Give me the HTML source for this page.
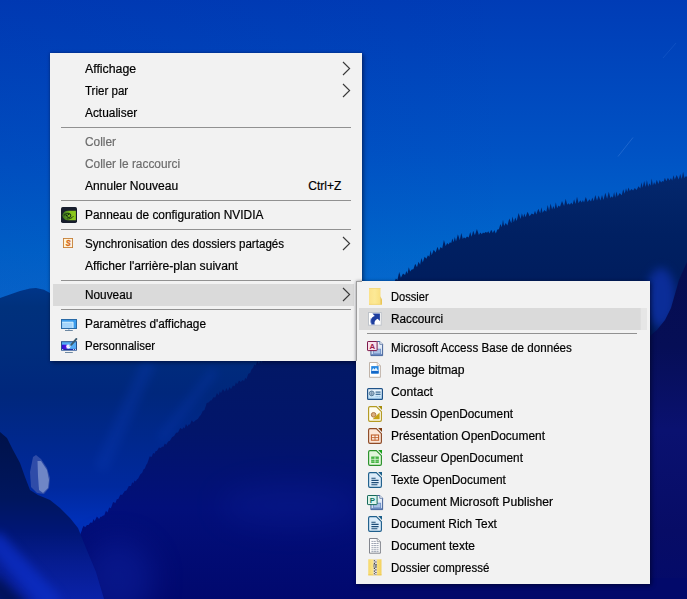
<!DOCTYPE html>
<html><head><meta charset="utf-8"><title>Bureau</title>
<style>
html,body{margin:0;padding:0;}
body{width:687px;height:599px;overflow:hidden;position:relative;background:#0a3aa8;font-family:"Liberation Sans",sans-serif;}
#bg{position:absolute;left:0;top:0;width:687px;height:599px;}
.menu{position:absolute;background:#f2f2f2;box-sizing:border-box;}
.abs{position:absolute;}
.t{position:absolute;height:22px;line-height:22px;font-size:12px;color:#000;white-space:nowrap;transform-origin:0 50%;-webkit-text-stroke:0.2px currentColor;}
.t.dis{color:#6d6d6d;}
.sep{position:absolute;height:1px;background:#919191;}
.hl{position:absolute;height:22px;background:#dadada;}
#m2 .hl{background:linear-gradient(90deg,#dadada 0,#dadada 97.6%,#e6e6e6 98%,#e6e6e6 100%);}
#m1{left:50.3px;top:53.2px;width:311.4px;height:308.3px;box-shadow:0 0 0 1px rgba(255,255,255,0.0), 2px 2px 4px rgba(0,0,20,0.35), 0 0 3px rgba(0,0,30,0.35);}
#m2{left:356px;top:281.2px;width:294.3px;height:302.5px;box-shadow:2px 2px 4px rgba(0,0,20,0.35), 0 0 3px rgba(0,0,30,0.35);}
#m2edge{position:absolute;left:356px;top:281px;width:6px;height:80px;border-left:1px solid #9c9c9c;border-top:1px solid #9c9c9c;box-sizing:border-box;}
</style></head>
<body>
<div id="bg"><svg width="687" height="599" viewBox="0 0 687 599">
<defs>
<linearGradient id="sky" x1="0" y1="0" x2="0" y2="1">
<stop offset="0" stop-color="#003cb6"/>
<stop offset="0.25" stop-color="#0052c4"/>
<stop offset="0.42" stop-color="#0067cc"/>
<stop offset="0.52" stop-color="#0a6cd0"/>
</linearGradient>
<linearGradient id="skyh" x1="0" y1="0" x2="1" y2="0">
<stop offset="0" stop-color="#001e96" stop-opacity="0.13"/>
<stop offset="0.75" stop-color="#001e96" stop-opacity="0"/>
</linearGradient>
<linearGradient id="rm" gradientUnits="userSpaceOnUse" x1="0" y1="170" x2="0" y2="599">
<stop offset="0" stop-color="#04286e"/>
<stop offset="0.15" stop-color="#002062"/>
<stop offset="0.3" stop-color="#001c5c"/>
<stop offset="1" stop-color="#050e52"/>
</linearGradient>
<linearGradient id="fm" gradientUnits="userSpaceOnUse" x1="0" y1="288" x2="0" y2="599">
<stop offset="0" stop-color="#003588"/>
<stop offset="0.06" stop-color="#00317c"/>
<stop offset="0.2" stop-color="#002d7d"/>
<stop offset="0.34" stop-color="#00277c"/>
<stop offset="0.5" stop-color="#00288e"/>
<stop offset="0.64" stop-color="#00299e"/>
<stop offset="0.75" stop-color="#0030b8"/>
<stop offset="1" stop-color="#0030b8"/>
</linearGradient>
<linearGradient id="dr" gradientUnits="userSpaceOnUse" x1="0" y1="360" x2="0" y2="599">
<stop offset="0" stop-color="#021866"/>
<stop offset="0.3" stop-color="#02156a"/>
<stop offset="0.62" stop-color="#020f7a"/>
<stop offset="1" stop-color="#01086e"/>
</linearGradient>
<linearGradient id="fg" gradientUnits="userSpaceOnUse" x1="0" y1="432" x2="0" y2="599">
<stop offset="0" stop-color="#00124a"/>
<stop offset="0.4" stop-color="#00165e"/>
<stop offset="0.6" stop-color="#001676"/>
<stop offset="0.78" stop-color="#061c90"/>
<stop offset="1" stop-color="#0a22a8"/>
</linearGradient>
<linearGradient id="rs" gradientUnits="userSpaceOnUse" x1="0" y1="262" x2="0" y2="599">
<stop offset="0" stop-color="#050d50"/>
<stop offset="0.25" stop-color="#060e56"/>
<stop offset="0.5" stop-color="#0a1170"/>
<stop offset="0.8" stop-color="#070c66"/>
<stop offset="1" stop-color="#030a6a"/>
</linearGradient>
<filter color-interpolation-filters="sRGB" id="b12" x="-100%" y="-100%" width="300%" height="300%"><feGaussianBlur stdDeviation="14"/></filter>
<filter color-interpolation-filters="sRGB" id="b5" x="-100%" y="-100%" width="300%" height="300%"><feGaussianBlur stdDeviation="5"/></filter>
<filter color-interpolation-filters="sRGB" id="b1"><feGaussianBlur stdDeviation="0.7"/></filter>
<filter color-interpolation-filters="sRGB" id="b05"><feGaussianBlur stdDeviation="0.45"/></filter>
</defs>
<rect width="687" height="599" fill="url(#sky)"/>
<rect width="687" height="330" fill="url(#skyh)"/>
<path d="M633 137.5 L618 156.5" stroke="#4a84dc" stroke-width="0.9" opacity="0.45"/>
<path d="M676 43 L663 58" stroke="#2f6cd4" stroke-width="0.8" opacity="0.4"/>
<path fill="url(#rm)" d="M372 303 L386 289 L386.0 289.1 L387.4 284.7 L388.8 286.4 L390.5 283.5 L392.1 283.9 L393.3 281.0 L394.4 281.9 L395.9 278.6 L397.4 279.9 L399.2 272.1 L400.9 277.8 L403.0 273.6 L405.1 274.9 L406.3 271.1 L407.5 273.7 L408.8 267.3 L410.1 271.6 L411.7 269.4 L413.4 269.3 L415.2 263.8 L417.0 267.3 L418.5 261.8 L420.1 264.7 L421.4 258.1 L422.8 262.5 L424.6 256.7 L426.4 258.7 L427.9 255.2 L429.4 256.7 L430.6 250.3 L431.7 255.2 L433.7 249.8 L435.7 252.6 L437.4 246.7 L439.0 250.7 L440.6 246.9 L442.2 248.5 L443.9 240.1 L445.7 246.0 L447.2 242.9 L448.6 244.4 L449.9 242.3 L451.2 243.1 L452.4 238.6 L453.6 242.3 L454.8 237.0 L456.0 241.6 L457.9 234.2 L459.8 240.0 L461.3 233.0 L462.8 238.9 L464.0 237.3 L465.3 238.5 L467.0 236.4 L468.7 237.4 L470.2 231.9 L471.6 236.8 L473.2 230.7 L474.9 235.3 L476.9 229.1 L478.9 235.0 L480.4 232.6 L481.8 234.2 L483.0 232.6 L484.2 233.3 L485.6 232.0 L487.1 232.8 L488.3 231.3 L489.5 233.5 L491.2 229.8 L492.9 233.0 L494.3 229.9 L495.8 233.6 L497.4 229.4 L498.9 229.2 L500.4 223.9 L501.8 226.9 L503.0 219.8 L504.1 226.0 L505.7 223.0 L507.4 225.6 L509.3 218.6 L511.3 223.3 L512.6 216.6 L513.8 222.3 L515.3 217.6 L516.7 220.9 L518.6 213.1 L520.6 218.9 L521.9 213.2 L523.2 217.4 L524.4 213.5 L525.5 217.3 L527.6 211.8 L529.6 216.2 L531.7 213.4 L533.7 214.5 L535.0 210.8 L536.3 214.4 L538.3 208.8 L540.2 213.3 L541.4 207.2 L542.6 212.7 L544.4 210.0 L546.3 211.8 L547.7 204.9 L549.1 210.7 L550.6 203.4 L552.1 209.5 L553.4 206.0 L554.6 209.2 L555.8 202.2 L557.1 208.3 L558.5 205.5 L560.0 206.7 L562.0 200.9 L564.1 206.1 L565.7 198.8 L567.2 204.8 L568.5 203.2 L569.9 204.8 L571.2 202.6 L572.6 204.6 L574.1 199.3 L575.5 204.1 L577.0 196.8 L578.6 203.3 L580.2 200.3 L581.8 202.5 L582.9 200.0 L584.0 202.5 L585.8 197.1 L587.7 202.0 L589.3 199.2 L591.0 201.6 L592.3 197.4 L593.7 201.2 L595.3 194.9 L597.0 200.6 L598.7 195.5 L600.4 200.4 L602.0 194.9 L603.5 200.1 L605.3 192.7 L607.1 198.8 L608.8 191.8 L610.4 198.1 L611.7 196.2 L612.9 197.7 L614.1 192.0 L615.2 197.8 L616.5 191.4 L617.7 196.5 L619.7 192.9 L621.7 195.3 L623.2 189.3 L624.7 193.7 L626.0 188.2 L627.2 192.1 L628.5 187.6 L629.8 191.0 L631.5 189.0 L633.1 190.4 L634.8 188.0 L636.6 190.1 L638.5 186.3 L640.3 188.5 L641.5 182.2 L642.6 187.8 L644.2 181.0 L645.7 187.0 L646.9 180.1 L648.2 186.7 L649.4 183.3 L650.6 185.8 L651.7 178.6 L652.9 185.4 L654.1 182.1 L655.3 184.8 L656.8 179.8 L658.4 183.9 L659.7 179.9 L661.1 182.5 L662.3 180.9 L663.5 181.8 L664.9 177.7 L666.3 181.3 L667.9 177.7 L669.5 180.4 L670.9 177.9 L672.2 180.4 L673.5 175.3 L674.8 179.5 L676.7 174.9 L678.7 179.4 L680.2 173.9 L681.7 178.9 L683.1 171.8 L684.5 178.1 L686.0 175.9 L687.0 177.1 L687 599 L372 599 Z" filter="url(#b05)"/>
<ellipse cx="661" cy="298" rx="15" ry="30" fill="#0c2e9c" opacity="0.95" filter="url(#b5)"/>
<path fill="url(#rs)" d="M690 258 L687 262 L679 280 L675 294 L671 308 L665 320 L657 330 L650 336 L640 345 L640 599 L690 599 Z" filter="url(#b1)"/>
<rect x="340" y="578" width="347" height="21" fill="#02096a"/>
<path fill="url(#fm)" d="M-5 300 L0 298 L10 294.5 L20 291 L30 288.6 L36 288 L44 289.7 L50 293 L70 302 L120 320 L260 340 L360 360 L360 599 L-5 599 Z" filter="url(#b1)"/>
<path d="M150 360 L100 470" stroke="#0a38b0" stroke-width="14" opacity="0.35" filter="url(#b5)"/>
<path d="M215 370 L160 440" stroke="#0a38b0" stroke-width="10" opacity="0.3" filter="url(#b5)"/>
<path fill="url(#dr)" d="M70 599 L76 545 L82 530 L82.0 529.3 L83.6 525.8 L85.2 527.3 L86.9 525.0 L88.6 525.1 L90.4 522.5 L92.3 522.7 L93.5 518.9 L94.7 521.1 L96.9 516.6 L99.1 518.9 L100.4 516.8 L101.7 516.8 L103.0 515.6 L104.3 515.5 L105.9 510.7 L107.5 512.4 L109.2 507.5 L110.9 508.2 L113.1 502.0 L115.4 503.1 L116.8 499.3 L118.3 498.9 L120.3 494.7 L122.3 494.8 L124.5 491.2 L126.7 490.2 L128.8 486.0 L131.0 486.1 L132.2 482.2 L133.3 483.6 L134.5 480.6 L135.7 481.6 L137.0 479.4 L138.2 478.5 L140.2 474.5 L142.2 472.7 L143.6 469.2 L144.9 468.5 L146.1 465.1 L147.3 463.6 L149.6 456.5 L151.8 456.7 L153.1 452.9 L154.5 453.8 L155.7 450.9 L156.9 451.0 L158.9 447.6 L160.9 448.0 L162.1 446.4 L163.3 446.9 L164.8 443.6 L166.3 444.8 L168.1 441.4 L169.9 440.7 L172.0 437.2 L174.1 436.0 L176.1 432.7 L178.0 432.5 L180.2 428.1 L182.3 429.2 L183.4 427.3 L184.6 428.4 L186.0 424.1 L187.4 426.4 L188.7 424.4 L190.0 424.6 L191.7 420.3 L193.4 422.3 L195.6 420.3 L197.8 418.9 L199.4 416.4 L201.0 414.7 L202.7 411.0 L204.5 410.0 L206.7 403.1 L209.0 402.3 L210.2 400.6 L211.5 400.6 L213.4 397.2 L215.3 397.4 L216.9 393.0 L218.6 395.2 L219.8 391.3 L221.0 393.3 L222.9 388.9 L224.9 391.8 L226.4 388.1 L227.9 391.0 L229.5 387.1 L231.0 389.3 L232.9 385.5 L234.7 386.2 L235.9 382.2 L237.1 384.3 L239.0 380.6 L240.9 382.1 L242.5 380.0 L244.1 381.1 L245.3 377.7 L246.4 379.2 L248.3 373.7 L250.2 373.1 L251.6 369.2 L253.0 368.1 L254.3 364.4 L255.7 365.5 L257.3 361.0 L258.9 363.9 L260.2 360.8 L261.5 362.8 L263.7 358.6 L265.8 358.8 L267.0 355.5 L268.3 357.2 L270.2 351.6 L272.1 353.3 L273.7 351.4 L275.4 350.8 L277.2 346.9 L279.0 348.1 L281.2 344.9 L283.5 343.7 L285.6 341.1 L287.7 340.6 L289.1 337.9 L290.6 337.8 L292.2 335.5 L293.8 335.1 L295.1 333.0 L296.3 333.2 L298.2 328.8 L300.0 330.6 L301.9 328.5 L300.0 329.9 L360 330 L360 599 Z" filter="url(#b05)"/>
<ellipse cx="290" cy="505" rx="70" ry="22" fill="#1226a0" opacity="0.25" filter="url(#b12)"/>
<ellipse cx="118" cy="580" rx="36" ry="40" fill="#0c1e98" opacity="0.6" filter="url(#b12)"/>
<path fill="url(#fg)" d="M0 432 L7 438 L13 450 L20 463 L25 477 L30 490 L38 495 L50 500 L60 508 L70 518 L78 528 L86 548 L96 572 L104 599 L0 599 Z" filter="url(#b05)"/>
<path d="M-8 538 L55 606" stroke="#0c2ec6" stroke-width="20" opacity="0.75" filter="url(#b5)"/>
<path d="M-10 582 L22 612" stroke="#00104e" stroke-width="20" opacity="0.85" filter="url(#b5)"/>
<path fill="#2f4ca8" d="M33 457 L36 455 L41 459 L47 468 L50 478 L49 488 L44 494 L37 493 L31 487 L30 472 Z" filter="url(#b1)"/>
<path fill="#6f86c6" d="M37.5 461 L41 461 L47 470 L49 480 L48 488 L43 493 L39 490 L38 476 Z" filter="url(#b1)"/>
</svg></div>
<div class="menu" id="m1">
<div class="t" style="left:35.0px;top:4.799999999999997px;transform:scaleX(1.0275);">Affichage</div>
<svg class="abs" style="left:292.0px;top:7.399999999999999px" width="9" height="15" viewBox="0 0 9 15"><path d="M1 1 L7.6 7.5 L1 14" fill="none" stroke="#3a3a3a" stroke-width="1.15"/></svg>
<div class="t" style="left:35.0px;top:26.799999999999997px;transform:scaleX(0.9620);">Trier par</div>
<svg class="abs" style="left:292.0px;top:29.39999999999999px" width="9" height="15" viewBox="0 0 9 15"><path d="M1 1 L7.6 7.5 L1 14" fill="none" stroke="#3a3a3a" stroke-width="1.15"/></svg>
<div class="t" style="left:35.0px;top:48.8px;transform:scaleX(0.9907);">Actualiser</div>
<div class="sep" style="left:10.700000000000003px;top:73.8px;width:290px"></div>
<div class="t dis" style="left:35.0px;top:77.8px;transform:scaleX(0.9890);">Coller</div>
<div class="t dis" style="left:35.0px;top:99.8px;transform:scaleX(0.9903);">Coller le raccourci</div>
<div class="t" style="left:35.0px;top:121.8px;transform:scaleX(1.0039);">Annuler Nouveau</div>
<div class="t" style="left:258.0px;top:121.8px">Ctrl+Z</div>
<div class="sep" style="left:10.700000000000003px;top:146.8px;width:290px"></div>
<div class="abs" style="left:10.700000000000003px;top:153.8px;line-height:0"><svg width="16" height="16" viewBox="0 0 16 16"><defs><linearGradient id="nv" x1="0" y1="0" x2="1" y2="0"><stop offset="0" stop-color="#33601f"/><stop offset="0.35" stop-color="#5a9a22"/><stop offset="0.6" stop-color="#86c41a"/><stop offset="1" stop-color="#8fcc1c"/></linearGradient></defs>
<rect x="0" y="0" width="16" height="16" rx="1.7" fill="#171d2c"/>
<path d="M1.2 8.4 C1.8 5.6 4 3.7 7 3.7 H14.9 V13.3 H7 C4 13.3 1.8 11.2 1.2 8.4 Z" fill="url(#nv)"/>
<path d="M2.8 8.6 C4.2 6.2 7.6 5.6 9.4 7.4 C10.4 8.8 9.4 10.6 7.6 10.5 C6 10.2 5.6 8.8 6.4 7.9" fill="none" stroke="#1d3d12" stroke-width="1.05"/>
<path d="M5.6 11.9 C8.4 12.3 11 11.2 12.4 9.2" fill="none" stroke="#1d3d12" stroke-width="1"/>
<circle cx="5.4" cy="8.4" r="0.7" fill="#122a0c"/><circle cx="7.6" cy="7.4" r="0.7" fill="#122a0c"/></svg></div>
<div class="t" style="left:35.0px;top:150.8px;transform:scaleX(0.9904);">Panneau de configuration NVIDIA</div>
<div class="sep" style="left:10.700000000000003px;top:175.8px;width:290px"></div>
<div class="abs" style="left:12.700000000000003px;top:184.8px;line-height:0"><svg width="10" height="10" viewBox="0 0 10 10"><rect x="0.45" y="0.45" width="9.1" height="9.1" fill="#fff3da" stroke="#c68038" stroke-width="0.9"/>
<text transform="translate(5.1,8.35) scale(0.8,1)" font-family="Liberation Sans, sans-serif" font-size="9.3" font-weight="bold" font-style="italic" fill="#d66a14" stroke="#d66a14" stroke-width="0.3" text-anchor="middle">S</text></svg></div>
<div class="t" style="left:35.0px;top:179.8px;transform:scaleX(0.9659);">Synchronisation des dossiers partagés</div>
<svg class="abs" style="left:292.0px;top:182.39999999999998px" width="9" height="15" viewBox="0 0 9 15"><path d="M1 1 L7.6 7.5 L1 14" fill="none" stroke="#3a3a3a" stroke-width="1.15"/></svg>
<div class="t" style="left:35.0px;top:201.8px;transform:scaleX(1.0100);">Afficher l'arrière-plan suivant</div>
<div class="sep" style="left:10.700000000000003px;top:226.8px;width:290px"></div>
<div class="hl" style="left:2.700000000000003px;top:230.8px;width:301px"></div>
<div class="t" style="left:35.0px;top:230.8px;transform:scaleX(0.9845);">Nouveau</div>
<svg class="abs" style="left:292.0px;top:233.40000000000003px" width="9" height="15" viewBox="0 0 9 15"><path d="M1 1 L7.6 7.5 L1 14" fill="none" stroke="#3a3a3a" stroke-width="1.15"/></svg>
<div class="sep" style="left:10.700000000000003px;top:255.8px;width:290px"></div>
<div class="abs" style="left:10.700000000000003px;top:265.6px;line-height:0"><svg width="16" height="13" viewBox="0 0 16 13"><rect x="0.5" y="0.5" width="15" height="9" fill="#3c9cec" stroke="#2a6aa6"/>
<rect x="1.1" y="3" width="11.2" height="6" fill="#a4d4fa"/>
<path d="M1.1 3.2 H12 V9" fill="none" stroke="#d6f2ff" stroke-width="0.9"/>
<rect x="7.4" y="10" width="1" height="1.2" fill="#8fb0cc"/>
<rect x="4" y="11.1" width="7.8" height="0.8" fill="#4c6e8e"/></svg></div>
<div class="t" style="left:35.0px;top:259.8px;transform:scaleX(0.9852);">Paramètres d'affichage</div>
<div class="abs" style="left:10.700000000000003px;top:283.40000000000003px;line-height:0"><svg width="18" height="17" viewBox="0 0 18 17"><defs><linearGradient id="pp" x1="0" y1="0" x2="1" y2="0"><stop offset="0" stop-color="#2c10d8"/><stop offset="0.7" stop-color="#4a18dc"/><stop offset="1" stop-color="#9a48e4"/></linearGradient></defs>
<rect x="0.5" y="4.7" width="15" height="8.4" fill="#54acf6" stroke="#27508e"/>
<rect x="1" y="7.7" width="5" height="4.7" fill="url(#pp)"/>
<ellipse cx="7.4" cy="9.6" rx="2.1" ry="2.1" fill="#f5eeff"/>
<rect x="1" y="11.9" width="14" height="1.2" fill="#1a2aa2"/>
<rect x="1.2" y="12" width="1" height="0.9" fill="#fff"/><rect x="12.2" y="12" width="0.9" height="0.9" fill="#fff"/><rect x="14" y="12" width="0.9" height="0.9" fill="#fff"/>
<path d="M8.6 9 L10.4 7.4" stroke="#9cc8f0" stroke-width="1.6" stroke-linecap="round"/>
<path d="M10.2 7.8 L15.4 1.9" stroke="#3a5a6e" stroke-width="1.9" stroke-linecap="round"/>
<rect x="4" y="15.1" width="7.8" height="0.8" fill="#4c6e8e"/></svg></div>
<div class="t" style="left:35.0px;top:281.8px;transform:scaleX(0.9554);">Personnaliser</div>
</div>
<div class="menu" id="m2">
<div class="abs" style="left:13px;top:6.800000000000011px;line-height:0"><svg width="14" height="17" viewBox="0 0 14 17"><defs><linearGradient id="fo" x1="0" y1="0" x2="1" y2="0"><stop offset="0" stop-color="#fbe28a"/><stop offset="0.5" stop-color="#fce996"/><stop offset="1" stop-color="#f9df80"/></linearGradient></defs>
<path d="M0 0.4 H11.5 V16.6 H0 Z" fill="url(#fo)"/>
<path d="M0 0.4 H11.5" stroke="#f3d36c" stroke-width="0.8"/>
<path d="M11.3 8.2 L13 11.4 V16.6 H11.3 Z" fill="#eac656"/>
<rect x="0" y="15.9" width="13" height="0.7" fill="#f0cf62"/></svg></div>
<div class="t" style="left:35.30000000000001px;top:4.800000000000011px;transform:scaleX(0.9266);">Dossier</div>
<div class="hl" style="left:3px;top:26.80000000000001px;width:288px"></div>
<div class="abs" style="left:12px;top:30.80000000000001px;line-height:0"><svg width="14" height="14" viewBox="0 0 14 14"><rect x="0.5" y="0.5" width="12.7" height="12.7" fill="#ffffff" stroke="#bfc4ca"/>
<path d="M4.4 1.6 H11.9 V9 L9.6 6.7 C7.2 7.8 5.9 9.9 6.7 12.5 L3.4 12.4 C1.7 8.6 3 5 6.8 3.9 Z" fill="#1e3e9e"/>
<path d="M3.2 6 C2.4 8 2.6 10.4 3.6 12.2" stroke="#7f96d4" stroke-width="0.7" fill="none"/></svg></div>
<div class="t" style="left:35.30000000000001px;top:26.80000000000001px;transform:scaleX(0.9783);">Raccourci</div>
<div class="sep" style="left:11px;top:51.80000000000001px;width:270px"></div>
<div class="abs" style="left:10.800000000000011px;top:59.400000000000034px;line-height:0"><svg width="17" height="16" viewBox="0 0 17 16"><defs><linearGradient id="ogA" x1="0" y1="0" x2="0" y2="1"><stop offset="0" stop-color="#f6f9fd"/><stop offset="1" stop-color="#c2d4ee"/></linearGradient></defs>
<path d="M3.9 0.5 H12.8 L15.6 3.3 V14.6 H3.9 Z" fill="url(#ogA)" stroke="#36568f" stroke-width="0.9"/>
<path d="M12.8 0.5 V3.3 H15.6" fill="#ffffff" stroke="#36568f" stroke-width="0.7"/>
<rect x="6.6" y="8.2" width="7" height="4.6" fill="#a9c1e5" stroke="#6b8cc4" stroke-width="0.8"/>
<rect x="4.3" y="13.3" width="10.9" height="1" fill="#4f70ae"/>
<rect x="0.5" y="0.5" width="9.6" height="9.1" rx="0.6" fill="#f9e0ec" stroke="#7e1a4c" stroke-width="1"/>
<text x="5.3" y="7.9" font-family="Liberation Sans, sans-serif" font-size="7.8" font-weight="bold" fill="#9a1a4a" text-anchor="middle">A</text></svg></div>
<div class="t" style="left:35.30000000000001px;top:55.80000000000001px;transform:scaleX(0.9685);">Microsoft Access Base de données</div>
<div class="abs" style="left:13.199999999999989px;top:80.90000000000003px;line-height:0"><svg width="13" height="16" viewBox="0 0 13 16"><path d="M0.5 0.5 H8.2 L11.4 3.7 V15.3 H0.5 Z" fill="#ffffff" stroke="#b9aa9e" stroke-width="0.9"/>
<path d="M8.2 0.5 V3.7 H11.4" fill="#f6f2ee" stroke="#b9aa9e" stroke-width="0.7"/>
<rect x="2.2" y="4.1" width="7.4" height="7.4" fill="#2486e0"/>
<path d="M2.2 9.4 L4.2 5.9 L5.5 7.6 L7 5.4 L9.6 9.4 Z" fill="#eef7ff"/>
<rect x="2.2" y="8.9" width="7.4" height="2.6" fill="#1468c8"/></svg></div>
<div class="t" style="left:35.30000000000001px;top:77.80000000000001px;transform:scaleX(1.0123);">Image bitmap</div>
<div class="abs" style="left:11px;top:106.80000000000001px;line-height:0"><svg width="16" height="12" viewBox="0 0 16 12"><defs><linearGradient id="ct" x1="0" y1="0" x2="0" y2="1"><stop offset="0" stop-color="#f4fafe"/><stop offset="0.6" stop-color="#d4ebfb"/><stop offset="1" stop-color="#b4dcf6"/></linearGradient></defs>
<rect x="0.6" y="0.6" width="14.8" height="10.8" rx="0.9" fill="url(#ct)" stroke="#1f5288" stroke-width="1.2"/>
<circle cx="4.7" cy="5.4" r="2.4" fill="#dcecf8" stroke="#4a6f8f" stroke-width="0.9"/>
<path d="M2.3 5.4 H7.1 M4.7 3 V7.8 M3.2 4.2 H6.2 M3.2 6.6 H6.2" stroke="#4a6f8f" stroke-width="0.5"/>
<rect x="8.6" y="3.5" width="5" height="1.2" fill="#36668f"/><rect x="8.6" y="5.7" width="5" height="1.2" fill="#36668f"/>
<path d="M8.6 8.6 H13.6" stroke="#8fb8d8" stroke-width="0.8" stroke-dasharray="1 0.6"/></svg></div>
<div class="t" style="left:35.30000000000001px;top:99.80000000000001px;transform:scaleX(1.0131);">Contact</div>
<div class="abs" style="left:12px;top:124.80000000000001px;line-height:0"><svg width="14" height="16" viewBox="0 0 14 16"><path d="M2 0.6 H8.3 L13.4 5.7 V14 Q13.4 15.4 12 15.4 H2 Q0.6 15.4 0.6 14 V2 Q0.6 0.6 2 0.6 Z" fill="#fffdf0" stroke="#b39a22" stroke-width="1.15"/>
<path d="M10.1 0 H14 V3.9 Z" fill="#a48c0c"/>
<circle cx="5.6" cy="8.8" r="2.3" fill="#dcae7c" stroke="#a8703a" stroke-width="0.9"/><path d="M4.6 13.2 L11.6 6.6 V13.2 Z" fill="#c6a212"/></svg></div>
<div class="t" style="left:35.30000000000001px;top:121.80000000000001px;transform:scaleX(0.9834);">Dessin OpenDocument</div>
<div class="abs" style="left:12px;top:146.8px;line-height:0"><svg width="14" height="16" viewBox="0 0 14 16"><path d="M2 0.6 H8.3 L13.4 5.7 V14 Q13.4 15.4 12 15.4 H2 Q0.6 15.4 0.6 14 V2 Q0.6 0.6 2 0.6 Z" fill="#fce6d8" stroke="#8e4a26" stroke-width="1.15"/>
<path d="M10.1 0 H14 V3.9 Z" fill="#7e3c10"/>
<rect x="3.4" y="7" width="7.2" height="5.2" fill="#fdeee4" stroke="#c0602c" stroke-width="1.1"/><path d="M3.4 9.6 H10.6 M7 7 V12.2" stroke="#c0602c" stroke-width="0.9"/></svg></div>
<div class="t" style="left:35.30000000000001px;top:143.8px;transform:scaleX(0.9951);">Présentation OpenDocument</div>
<div class="abs" style="left:12px;top:168.8px;line-height:0"><svg width="14" height="16" viewBox="0 0 14 16"><path d="M2 0.6 H8.3 L13.4 5.7 V14 Q13.4 15.4 12 15.4 H2 Q0.6 15.4 0.6 14 V2 Q0.6 0.6 2 0.6 Z" fill="#e2f6dc" stroke="#2a922a" stroke-width="1.15"/>
<path d="M10.1 0 H14 V3.9 Z" fill="#18a018"/>
<rect x="3.2" y="6.6" width="7.6" height="6.2" fill="#1fa21f"/><path d="M3.2 9.7 H10.8 M7 6.6 V12.8" stroke="#e2f6dc" stroke-width="0.9"/><path d="M3.2 8.1 H10.8 M3.2 11.3 H10.8" stroke="#e2f6dc" stroke-width="0.5"/></svg></div>
<div class="t" style="left:35.30000000000001px;top:165.8px;transform:scaleX(0.9790);">Classeur OpenDocument</div>
<div class="abs" style="left:12px;top:190.8px;line-height:0"><svg width="14" height="16" viewBox="0 0 14 16"><path d="M2 0.6 H8.3 L13.4 5.7 V14 Q13.4 15.4 12 15.4 H2 Q0.6 15.4 0.6 14 V2 Q0.6 0.6 2 0.6 Z" fill="#dcecfa" stroke="#1f5f8c" stroke-width="1.15"/>
<path d="M10.1 0 H14 V3.9 Z" fill="#1a5f8a"/>
<path d="M3.4 6.2 H7.6 M3.4 8.4 H10.6 M3.4 10.6 H10.6 M3.4 12.8 H9.4" stroke="#1d4c78" stroke-width="1.1"/></svg></div>
<div class="t" style="left:35.30000000000001px;top:187.8px;transform:scaleX(0.9900);">Texte OpenDocument</div>
<div class="abs" style="left:10.800000000000011px;top:213.40000000000003px;line-height:0"><svg width="17" height="16" viewBox="0 0 17 16"><defs><linearGradient id="ogP" x1="0" y1="0" x2="0" y2="1"><stop offset="0" stop-color="#f6f9fd"/><stop offset="1" stop-color="#c2d4ee"/></linearGradient></defs>
<path d="M3.9 0.5 H12.8 L15.6 3.3 V14.6 H3.9 Z" fill="url(#ogP)" stroke="#36568f" stroke-width="0.9"/>
<path d="M12.8 0.5 V3.3 H15.6" fill="#ffffff" stroke="#36568f" stroke-width="0.7"/>
<rect x="6.6" y="8.2" width="7" height="4.6" fill="#a9c1e5" stroke="#6b8cc4" stroke-width="0.8"/>
<rect x="4.3" y="13.3" width="10.9" height="1" fill="#4f70ae"/>
<rect x="0.5" y="0.5" width="9.6" height="9.1" rx="0.6" fill="#dcf4ee" stroke="#176a5a" stroke-width="1"/>
<text x="5.3" y="7.9" font-family="Liberation Sans, sans-serif" font-size="7.8" font-weight="bold" fill="#0f7462" text-anchor="middle">P</text></svg></div>
<div class="t" style="left:35.30000000000001px;top:209.8px;transform:scaleX(1.0121);">Document Microsoft Publisher</div>
<div class="abs" style="left:12px;top:234.8px;line-height:0"><svg width="14" height="16" viewBox="0 0 14 16"><path d="M2 0.6 H8.3 L13.4 5.7 V14 Q13.4 15.4 12 15.4 H2 Q0.6 15.4 0.6 14 V2 Q0.6 0.6 2 0.6 Z" fill="#dcecfa" stroke="#1f5f8c" stroke-width="1.15"/>
<path d="M10.1 0 H14 V3.9 Z" fill="#1a5f8a"/>
<path d="M3.4 6.2 H7.6 M3.4 8.4 H10.6 M3.4 10.6 H10.6 M3.4 12.8 H9.4" stroke="#1d4c78" stroke-width="1.1"/></svg></div>
<div class="t" style="left:35.30000000000001px;top:231.8px;transform:scaleX(0.9883);">Document Rich Text</div>
<div class="abs" style="left:13.199999999999989px;top:256.90000000000003px;line-height:0"><svg width="13" height="17" viewBox="0 0 13 17"><path d="M0.5 0.5 H8.2 L11.4 3.7 V15.2 H0.5 Z" fill="#fdfdfd" stroke="#7c8088" stroke-width="0.95"/>
<path d="M8.2 0.5 V3.7 H11.4" fill="#eef0f3" stroke="#7c8088" stroke-width="0.7"/>
<path d="M2.4 3.4 H6.8 M2.4 5.5 H9.6 M2.4 7.6 H9.6 M2.4 9.7 H9.6 M2.4 11.8 H9.6 M2.4 13.6 H9.6" stroke="#8e96a6" stroke-width="0.85" stroke-dasharray="2.2 0.4"/></svg></div>
<div class="t" style="left:35.30000000000001px;top:253.8px;transform:scaleX(0.9983);">Document texte</div>
<div class="abs" style="left:12.399999999999977px;top:278.2px;line-height:0"><svg width="14" height="17" viewBox="0 0 14 17"><defs><linearGradient id="zp" x1="0" y1="0" x2="1" y2="0"><stop offset="0" stop-color="#f6d868"/><stop offset="0.3" stop-color="#fbe488"/><stop offset="0.7" stop-color="#f9df7a"/><stop offset="1" stop-color="#f3d15e"/></linearGradient></defs>
<rect x="0.3" y="0.3" width="13.2" height="16" fill="url(#zp)"/>
<rect x="0.3" y="15.4" width="13.2" height="0.9" fill="#ecc652"/>
<rect x="5.4" y="0.3" width="3.6" height="16" fill="#e2dcdc"/>
<path d="M6.4 1.2 V16" stroke="#3c3c3c" stroke-width="1.1" stroke-dasharray="1.1 1.5"/>
<path d="M7.9 2.5 V16" stroke="#3c3c3c" stroke-width="1.1" stroke-dasharray="1.1 1.5"/>
<rect x="5.9" y="5.6" width="2.6" height="2.8" fill="#f0f0f0" stroke="#505050" stroke-width="0.5"/>
<circle cx="7.2" cy="7" r="0.7" fill="#222"/></svg></div>
<div class="t" style="left:35.30000000000001px;top:275.8px;transform:scaleX(0.9571);">Dossier compressé</div>
</div>
<div id="m2edge"></div>
</body></html>
